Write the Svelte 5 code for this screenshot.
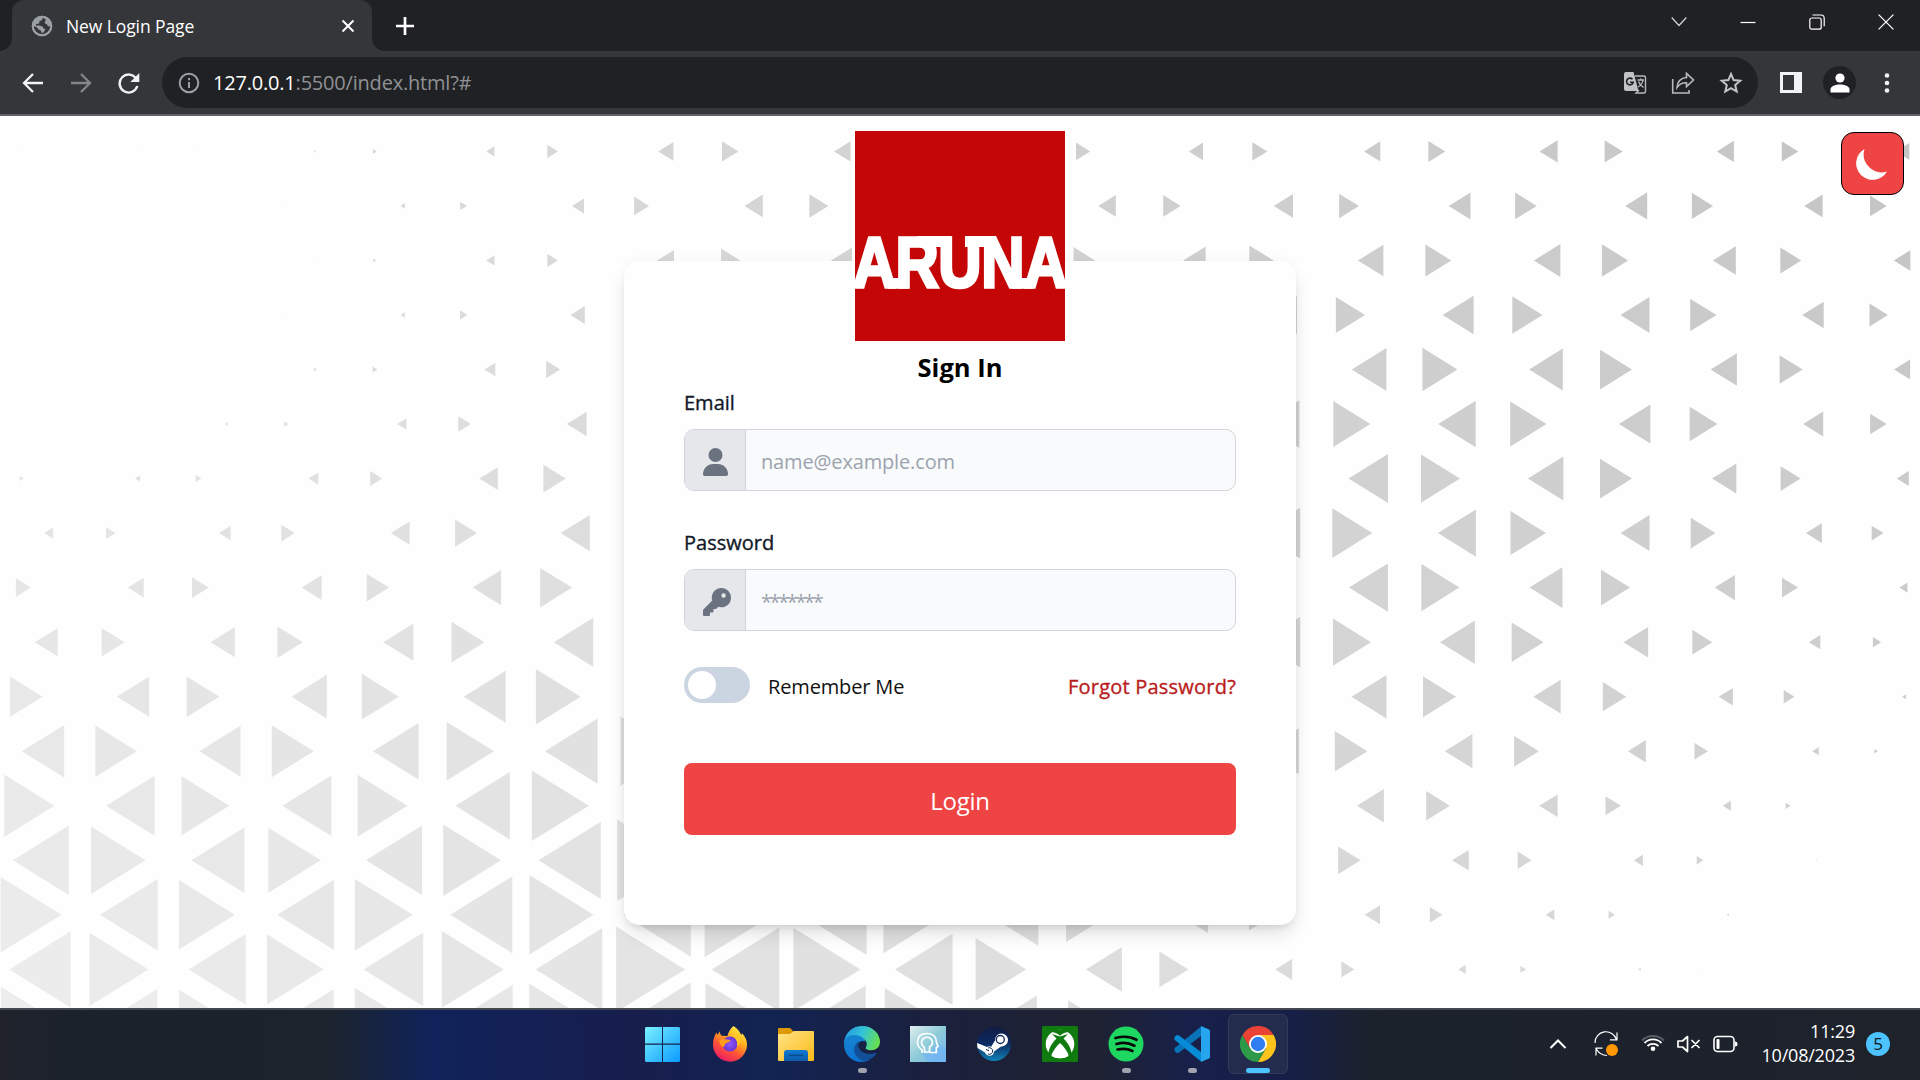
<script>
  // Width of every triangle, row by row. Even-indexed rows begin with a
  // right-pointing triangle, odd-indexed rows with a left-pointing one.
  const sizes = [
    [0.8, 0.8, 0.8, 2, 4, 8.2, 10.6, 15.2, 16.5, 16.5, 0, 0, 14.2, 14.2, 14.9, 16.3, 16.9, 18.1, 18.1, 17.1, 16.5, 13.4],
    [0, 0, 0, 0.7, 4.5, 6.7, 12, 15, 18.4, 19, 0, 0, 17.5, 17.5, 19.2, 19.8, 21.8, 21.6, 22, 21.2, 18.4, 16.7],
    [0, 0, 0, 0.8, 3, 8.2, 10.6, 17, 19.3, 21, 0, 0, 21.6, 22.5, 24.3, 25.5, 25.9, 26.5, 26.3, 23, 21, 16.5],
    [0, 0, 0, 0.6, 4.5, 7.5, 14.3, 0, 0, 0, 0, 0, 0, 0, 31, 29.2, 31, 30.2, 29, 26.3, 21.5, 18.4],
    [0, 0, 0.5, 3, 5, 11, 14, 0, 0, 0, 0, 0, 0, 0, 0, 34.7, 35, 33.7, 32, 26.3, 23, 16],
    [0.6, 0.8, 3, 4.3, 9.2, 12.5, 19.8, 0, 0, 0, 0, 0, 0, 0, 38.5, 37, 37.5, 36.3, 31.4, 27.8, 20, 16.5],
    [4, 5, 5.7, 9.8, 12, 18.4, 22.4, 0, 0, 0, 0, 0, 0, 0, 0, 39.5, 39, 35.5, 32, 24.3, 20, 12],
    [9, 9.3, 11.8, 13.5, 18.7, 22, 29.2, 0, 0, 0, 0, 0, 0, 0, 41, 40, 38, 35.5, 29, 24.8, 15.8, 11.8],
    [15, 15.9, 16.6, 20, 22.4, 28.4, 31.8, 0, 0, 0, 0, 0, 0, 0, 0, 39, 38, 33, 29, 20.2, 16, 8.2],
    [22.9, 22.9, 24.3, 25.3, 30, 33, 39.5, 0, 0, 0, 0, 0, 0, 0, 41, 38, 35, 31.8, 24.7, 20, 11.4, 8.2],
    [32.4, 32.4, 32.6, 35.3, 37, 42, 44.7, 0, 0, 0, 0, 0, 0, 0, 0, 35, 33, 27.3, 23.6, 14.2, 10.8, 4],
    [42.4, 41.4, 41.2, 42, 45.7, 47.3, 52.6, 55.8, 0, 0, 0, 0, 0, 0, 37, 32.6, 27.6, 24.8, 18, 13.5, 6.5, 3.5],
    [50.2, 48.5, 47.7, 49, 50, 54.3, 57, 0, 0, 0, 0, 0, 0, 0, 0, 27, 23.6, 18.3, 15.4, 8.2, 5, 0],
    [56, 54.5, 53, 52.5, 56, 57.8, 62.3, 65.7, 0, 0, 0, 0, 0, 0, 0, 22.4, 16.7, 14, 9, 6.7, 1, 0],
    [61, 57.6, 56, 56.6, 58, 62, 64, 67.5, 68.5, 65, 62, 50, 44, 29.5, 25.5, 15.3, 12.8, 8.6, 6.3, 2, 0, 0],
    [61.4, 59, 57, 56.5, 59.6, 62, 66.5, 69, 67.5, 67, 57.5, 50.5, 36, 29, 17, 13, 7.3, 5.5, 2.5, 1, 0, 0],
    [60, 56.5, 55, 56, 58, 63, 65, 67, 66, 62, 58, 46, 38, 22, 16, 0, 0, 0, 0, 0, 0, 0]
  ];
  const period = 176.64;
  const triangles = sizes.flatMap((row, r) =>
    row.map((w, i) => {
      const m = Math.floor(i / 2);
      const right = (i % 2 === 0) === (r % 2 === 0);
      const origin = r % 2 === 0 ? (right ? 20.9 : 138.4) : right ? 109.2 : 50.1;
      const cx = origin + m * period;
      const cy = 151.4 + r * 54.53;
      const d = right ? 1 : -1;
      const base = cx - (d * w) / 3;
      const tip = cx + (d * w * 2) / 3;
      const h = w * 0.62;
      const v = Math.round(220 - 0.0137 * cx + 0.0172 * cy);
      return {
        w,
        points: `${base.toFixed(1)},${(cy - h).toFixed(1)} ${tip.toFixed(1)},${cy.toFixed(1)} ${base.toFixed(1)},${(cy + h).toFixed(1)}`,
        fill: `rgb(${v},${v},${v})`
      };
    })
  ).filter((t) => t.w > 0);
</script>

<div class="screen">
  <header class="tabs">
    <div class="tab">
      <svg class="favicon" viewBox="0 0 22 22" width="22" height="22">
        <circle cx="11" cy="11" r="10.2" fill="#9aa0a6" />
        <path d="M12 2.4c-1 1.600-.2 2.400-2 3-1.800.5-2 1-1.600 2.200.3 1-1 1.300-2.400 1.200-1 0-1.500.8-.8 1.600.8.8 4.200.2 5.800.8 1.300.6.6 2 2 2.400 1.400.4 1.500 1.200.6 2.200-1 1-.9 2-2.400 2.100-1.200 0-.7-1.600-1.500-2.500-.9-.9-2.300-.3-2.700-1.700-.4-1.500-2.800-2.200-4.300-2.700a8.500 8.500 0 0 0 8.300 8.500c5 0 8.500-4 8.500-8.400-1.400.8-3 .2-3.200-1-.3-1.500-2.300-.9-2.600-2.400-.3-1.600 1.600-1.500 1-3-.4-1-1.700-1-2.700-2.300z" fill="#35363a" />
        <circle cx="11" cy="11" r="9.300" fill="none" stroke="#9aa0a6" stroke-width="2" />
      </svg>
      <span class="tab-title">New Login Page</span>
      <svg class="tab-close" viewBox="0 0 14 14" width="14" height="14"><path d="M1.500 1.500l11 11M12.500 1.500l-11 11" stroke="#fff" stroke-width="2" /></svg>
    </div>
    <svg class="plus" viewBox="0 0 18 18" width="18" height="18"><path d="M9 0v18M0 9h18" stroke="#fff" stroke-width="2.700" /></svg>
    <div class="window-controls">
      <svg viewBox="0 0 16 16" width="16" height="16"><path d="M.7 3.500L8 11.500l7.300-8" fill="none" stroke="#d5d6d7" stroke-width="1.200" /></svg>
      <svg viewBox="0 0 16 16" width="16" height="16"><path d="M.5 8.500h15" stroke="#fff" stroke-width="1.200" /></svg>
      <svg viewBox="0 0 16 16" width="16" height="16"><rect x=".8" y="4" width="11.400" height="11.200" rx="2" fill="none" stroke="#fff" stroke-width="1.200" /><path d="M3.500 1H12q3.200 0 3.200 3.200v8" fill="none" stroke="#fff" stroke-width="1.200" /></svg>
      <svg viewBox="0 0 16 16" width="16" height="16"><path d="M.6.6l14.800 14.800M15.400.6L.6 15.400" stroke="#fff" stroke-width="1.300" /></svg>
    </div>
  </header>

  <div class="toolbar">
    <div class="nav">
      <svg viewBox="0 0 22 22" width="22" height="22"><path d="M21 11H3M11 2l-9 9 9 9" fill="none" stroke="#f1f3f4" stroke-width="2.300" /></svg>
      <svg viewBox="0 0 22 22" width="22" height="22"><path d="M1 11h18M11 2l9 9-9 9" fill="none" stroke="#85868a" stroke-width="2.300" /></svg>
      <svg viewBox="0 0 22 22" width="22" height="22"><path d="M18.300 6.800A9 9 0 1 0 19.300 14" fill="none" stroke="#f1f3f4" stroke-width="2.400" /><path d="M21.300 1v9h-9z" fill="#f1f3f4" /></svg>
    </div>
    <div class="omnibox">
      <svg viewBox="0 0 22 22" width="22" height="22"><circle cx="11" cy="11" r="9.300" fill="none" stroke="#9aa0a6" stroke-width="2" /><path d="M11 10v6M11 6v2.200" stroke="#9aa0a6" stroke-width="2" /></svg>
      <span class="url"><b>127.0.0.1</b><span>:5500/index.html?#</span></span>
      <div class="omni-icons">
        <svg viewBox="0 0 24 24" width="24" height="24">
          <path d="M3 1h7.500l5 19H3a2 2 0 0 1-2-2V3a2 2 0 0 1 2-2z" fill="#c0c2c4" />
          <path d="M12 5h9a1.500 1.500 0 0 1 1.500 1.500v14A1.500 1.500 0 0 1 21 22h-8l3-3" fill="none" stroke="#b7b9bb" stroke-width="1.400" />
          <path d="M14.500 9h6.500M17.700 7.500V9M20 9c-.5 3-2.500 5.500-5 7M15.500 10.500c.8 2.500 2.500 4.500 5 6" fill="none" stroke="#b7b9bb" stroke-width="1.300" />
          <path d="M9.500 8.200a3.400 3.400 0 1 0 .8 3H7" fill="none" stroke="#202124" stroke-width="1.600" />
        </svg>
        <svg viewBox="0 0 24 24" width="24" height="24">
          <path d="M1.700 8v14H18v-3" fill="none" stroke="#b7b9bb" stroke-width="1.600" />
          <path d="M6 16.500C6.500 10 10 7 15.500 6.500V2.300l7 6.700-7 6.700v-4c-4.500-.2-7 1.300-9.500 4.800z" fill="none" stroke="#b7b9bb" stroke-width="1.600" />
        </svg>
        <svg viewBox="0 0 24 24" width="24" height="24"><path d="M12 3l2.600 6.100 6.600.6-5 4.300 1.500 6.500L12 17.100 6.300 20.500 7.800 14l-5-4.300 6.600-.6z" fill="none" stroke="#c4c5c7" stroke-width="2" /></svg>
      </div>
    </div>
    <svg class="panel" viewBox="0 0 22 21" width="22" height="21"><path d="M0 0h22v21H0zM3 3v15h11V3z" fill="#f1f3f4" fill-rule="evenodd" /></svg>
    <div class="avatar">
      <svg viewBox="0 0 20 20" width="20" height="20"><circle cx="10" cy="5" r="4.600" fill="#fff" /><path d="M.5 19.500v-3c0-3.500 5-5 9.500-5s9.500 1.500 9.500 5v3z" fill="#fff" /></svg>
    </div>
    <svg class="dots" viewBox="0 0 6 20" width="6" height="20"><circle cx="3" cy="2.500" r="2.300" fill="#f1f3f4" /><circle cx="3" cy="10" r="2.300" fill="#f1f3f4" /><circle cx="3" cy="17.500" r="2.300" fill="#f1f3f4" /></svg>
  </div>

  <main class="page">
    <svg class="pattern" viewBox="0 116 1920 892" width="1920" height="892">
      {#each triangles as t}
        <polygon points={t.points} fill={t.fill} />
      {/each}
    </svg>

    <button class="theme" aria-label="Dark mode">
      <svg viewBox="0 0 32 32" width="32" height="32"><path d="M9.500 0A18 18 0 0 0 32 22.500 16.500 16.500 0 1 1 9.500 0z" fill="#fff" /></svg>
    </button>

    <section class="card">
      <svg class="logo" viewBox="0 0 210 210" width="210" height="210">
        <rect width="210" height="210" fill="#c40606" />
        <text class="logo-word" x="-2" y="155.700" textLength="214" lengthAdjust="spacingAndGlyphs">ARUNA</text>
        <path d="M62 105h34v11H62zM110 105h31v11h-31zM33 147h20v10.800H33zM157 147h21v10.800h-21z" fill="#fff" />
      </svg>
      <h1>Sign In</h1>
      <label class="label" for="email">Email</label>
      <div class="field">
        <span class="addon">
          <svg viewBox="0 0 25 28" width="25" height="28"><circle cx="12.500" cy="7" r="7" fill="#6b7280" /><path d="M0 26.200C0 20.500 4.500 16 10 16h5c5.500 0 10 4.500 10 10.200 0 .9-.8 1.700-1.700 1.700H1.700C.8 27.900 0 27.100 0 26.200z" fill="#6b7280" /></svg>
        </span>
        <input id="email" type="text" placeholder="name@example.com" />
      </div>
      <label class="label second" for="password">Password</label>
      <div class="field">
        <span class="addon key">
          <svg viewBox="0 0 512 512" width="28" height="28"><path fill="#6b7280" fill-rule="evenodd" d="M336 352c97.200 0 176-78.800 176-176S433.200 0 336 0 160 78.800 160 176c0 18.700 2.900 36.800 8.300 53.700L7 391c-4.500 4.500-7 10.600-7 17v80c0 13.300 10.700 24 24 24h80c13.300 0 24-10.700 24-24v-40h40c13.300 0 24-10.700 24-24v-40h40c6.400 0 12.500-2.500 17-7l33.300-33.300c16.900 5.400 35 8.300 53.700 8.300zM376 96a40 40 0 1 1 0 80 40 40 0 1 1 0-80z" /></svg>
        </span>
        <input id="password" class="stars" type="text" placeholder="*******" />
      </div>
      <div class="options">
        <span class="toggle"><i></i></span>
        <span class="remember">Remember Me</span>
        <a class="forgot" href="#forgot">Forgot Password?</a>
      </div>
      <button class="login">Login</button>
    </section>
  </main>

  <footer class="taskbar">
    <div class="apps">
      <div class="app">
        <svg viewBox="0 0 36 36" width="36" height="36">
          <defs><linearGradient id="win" gradientUnits="userSpaceOnUse" x1="0" y1="0" x2="36" y2="36"><stop offset="0" stop-color="#7df3ff" /><stop offset="1" stop-color="#0a9bff" /></linearGradient></defs>
          <path d="M2 1h16v16.500H1V2zM19 1h16l1 1v15.500H19zM1 18.700h17V36H2l-1-1zM19 18.700h17V35l-1 1H19z" fill="url(#win)" />
        </svg>
      </div>
      <div class="app">
        <svg viewBox="0 0 36 36" width="36" height="36">
          <defs>
            <linearGradient id="fox" x1=".8" y1="0" x2=".25" y2="1"><stop offset="0" stop-color="#fff44f" /><stop offset=".35" stop-color="#ffb21c" /><stop offset=".65" stop-color="#ff5336" /><stop offset="1" stop-color="#e8186b" /></linearGradient>
            <radialGradient id="globe"><stop offset="0" stop-color="#9059ff" /><stop offset="1" stop-color="#6936d2" /></radialGradient>
          </defs>
          <path d="M21.500 0c4 2.500 6.500 5.500 7.600 9l1-1.700c3 3.500 4.900 6.700 4.900 11A17 17 0 0 1 1 19c0-5 1.200-9 3.500-12.500l1 2.500 2.300-3.800c.2 2 .7 3.500 2 4.500L15.500 10c1-4 2.800-7.500 6-10z" fill="url(#fox)" />
          <circle cx="18" cy="18" r="7.500" fill="url(#globe)" />
          <path d="M7 14.500c4-2 8-1 11.500-.3-1 2.500-4.500 2-5.500 4.300-.5 2.500-2.500 3.500-4 1.500z" fill="#ff9a1a" />
          <path d="M20 9.500c4 2 6 6 5 11 2.500-2 4-6 3-9-2-2.500-5-3-8-2z" fill="#ffc928" />
        </svg>
      </div>
      <div class="app">
        <svg viewBox="0 0 36 36" width="36" height="36">
          <defs><linearGradient id="fold" x1="0" y1="0" x2="1" y2="1"><stop offset="0" stop-color="#ffe488" /><stop offset="1" stop-color="#fbb917" /></linearGradient><linearGradient id="fb" x1="0" y1="0" x2="0" y2="1"><stop offset="0" stop-color="#0f7ad2" /><stop offset="1" stop-color="#0c5bab" /></linearGradient></defs>
          <path d="M0 3q0-1 1-1h11l4 4v5H0z" fill="#dd9a05" />
          <path d="M0 8h12l4-3h19q1 0 1 1v28q0 1-1 1H1q-1 0-1-1z" fill="url(#fold)" />
          <path d="M6 35V27q0-3 3-3h18q3 0 3 3v8z" fill="url(#fb)" /><path d="M11 29.300h14" stroke="#0a4a8a" stroke-width="1.500" />
        </svg>
      </div>
      <div class="app running">
        <svg viewBox="0 0 36 36" width="36" height="36">
          <defs><linearGradient id="e1" x1="0" y1=".2" x2="1" y2=".5"><stop offset="0" stop-color="#2696e3" /><stop offset=".5" stop-color="#33c3d6" /><stop offset="1" stop-color="#66e052" /></linearGradient><linearGradient id="e2" x1="0" y1="0" x2="0" y2="1"><stop offset="0" stop-color="#1585cf" /><stop offset="1" stop-color="#0d72d4" /></linearGradient></defs>
          <path d="M0 17C1 6 9 0 18 0c11 0 18 8 18 15.500 0 6-4 8.700-9 8.700-3.500 0-6-1.300-5.200-2.700 2.500-4 .2-9-5.800-9.500C9 11.500 3 13 0 17z" fill="url(#e1)" />
          <path d="M0 18c0-6 5-9 10.500-9S21 12 21 15.500c-5-2-8 1.500-7 7 1 6.500 6.500 11 13 10-3 2.500-6 3.500-9.500 3.500C7 36 0 28 0 18z" fill="url(#e2)" />
          <path d="M15 15.500c-4 2-5.500 6-4.500 10.500 1 4.500 5 8 9 9 5.500-.5 10-3 12.700-7.200.5-.9-.2-1.300-.9-1-7 3-16 .2-17-7-.2-1.500 0-3 .7-4.300z" fill="#124f99" />
        </svg>
      </div>
      <div class="app">
        <svg viewBox="0 0 36 36" width="36" height="36">
          <defs><linearGradient id="bulb" x1="0" y1="0" x2="1" y2="1"><stop offset="0" stop-color="#e0eef0" /><stop offset=".5" stop-color="#8ecbd8" /><stop offset="1" stop-color="#74b4ee" /></linearGradient></defs>
          <rect width="36" height="36" fill="url(#bulb)" />
          <path d="M11 27l8 9h17V22l-9-4-8 10z" fill="#70b3f5" opacity=".7" />
          <path d="M12 27v-3C8 21 7 18 7.500 15 8 10 12 7.500 17 7.500c6 0 9.500 3.500 9.500 9l1.500 4-1.700 1v5H20M14.500 27v-5.500C11 19 11 15.500 12.500 13.500c2-3 7-3 9 0 1.500 2.500 1 5.500-2 7.500V26h-5" fill="none" stroke="#fff" stroke-width="1.700" />
        </svg>
      </div>
      <div class="app">
        <svg viewBox="0 0 36 36" width="36" height="36">
          <defs><linearGradient id="st" x1="0" y1="0" x2="0" y2="1"><stop offset="0" stop-color="#111b45" /><stop offset=".5" stop-color="#0d2b63" /><stop offset="1" stop-color="#1084b9" /></linearGradient></defs>
          <circle cx="18" cy="18" r="17" fill="url(#st)" />
          <path d="M1 17l10 4c2-1 3-1 4 0l4-6.500a6.500 6.500 0 1 1 6 6l-7 5c0 5-7 6-9 1L1.500 22z" fill="#fff" />
          <circle cx="24.300" cy="13.500" r="4" fill="#fff" stroke="#142b58" stroke-width="1.400" />
          <path d="M10 23.500l3 1.200M12 28a3.300 3.300 0 1 0 0-6" fill="none" stroke="#142b58" stroke-width="1" />
        </svg>
      </div>
      <div class="app">
        <svg viewBox="0 0 36 36" width="36" height="36">
          <rect width="36" height="36" rx="1.500" fill="#107c10" /><circle cx="18" cy="18" r="14.300" fill="#fff" />
          <path d="M9 6.500c3-.8 6 .8 9 3.200 3-2.400 6-4 9-3.200l-1-3H10zM14.500 12.500C9 18 6 24 6.300 29.500L9 30c2-5 5-9.500 9-13 4 3.500 7 8 9 13l2.700-.5C30 24 27 18 21.500 12.500L26 8l-8 2.500L10 8z" fill="#107c10" />
          <path d="M9.500 30c2.500-5 5-9 8.500-12 3.500 3 6 7 8.500 12-5 3-12 3-17 0z" fill="#fff" />
        </svg>
      </div>
      <div class="app running">
        <svg viewBox="0 0 36 36" width="36" height="36"><circle cx="18" cy="18" r="17.500" fill="#1ed760" /><path d="M7.500 12c7.500-2 15-1.500 21 1.800M8.500 18c6-1.700 12.500-1.200 18 1.700M9.500 23.500c5.500-1.300 10.500-.8 15 1.500" fill="none" stroke="#0a0a0a" stroke-width="2.700" stroke-linecap="round" /></svg>
      </div>
      <div class="app running">
        <svg viewBox="0 0 36 36" width="36" height="36">
          <path d="M1 25.500q2 2.500 4 1L27 10V.5L.8 22q-1 1.500.2 3.500z" fill="#0873b8" />
          <path d="M5 9.500L27 26v9.500L.8 14q-1-1.500.2-3.500 2-2.500 4-1z" fill="#078bd4" />
          <path d="M27 0l8 3.500q1 .5 1 1.500v26q0 1-1 1.500L27 36z" fill="#26a4ee" />
        </svg>
      </div>
      <div class="app active">
        <svg viewBox="0 0 36 36" width="36" height="36">
          <path d="M2.400 9A18 18 0 0 1 33.600 9H18z" fill="#ea4335" />
          <path d="M33.600 9A18 18 0 0 1 18 36l7.800-13.500L18 9z" fill="#fcc31c" />
          <path d="M2.400 9A18 18 0 0 0 18 36l7.800-13.500H10.200z" fill="#2d9a49" />
          <path d="M2.400 9l7.800 13.500L18 9z" fill="#ea4335" />
          <circle cx="18" cy="18" r="9" fill="#fff" /><circle cx="18" cy="18" r="7.200" fill="#2f7df0" />
        </svg>
      </div>
    </div>
    <div class="tray">
      <svg viewBox="0 0 18 12" width="18" height="12"><path d="M1.500 10L9 2.500l7.500 7.500" fill="none" stroke="#fff" stroke-width="2" /></svg>
      <svg class="sync" viewBox="0 0 26 26" width="26" height="26"><path d="M2 12A11 11 0 0 1 23.500 8.500M24 1.500v7.300h-7M3 24.500v-7.300h6.500M3 17.500C5.500 22 9 24.500 14 24.500" fill="none" stroke="#fff" stroke-width="1.200" /><circle cx="19" cy="19" r="6" fill="#ff9800" /></svg>
      <svg class="wifi" viewBox="0 0 24 20" width="24" height="20">
        <path d="M1 8.500a15.500 15.500 0 0 1 22 0" fill="none" stroke="#5a5d64" stroke-width="2" />
        <path d="M3.500 11a12 12 0 0 1 17 0M6.500 14a8 8 0 0 1 11 0" fill="none" stroke="#fff" stroke-width="1.800" /><circle cx="12" cy="16.800" r="2.300" fill="#fff" />
      </svg>
      <svg class="sound" viewBox="0 0 24 18" width="24" height="18"><path d="M1 6v6h4.500l5 4.500v-15L5.500 6zM14.500 5l8 8M22.500 5l-8 8" fill="none" stroke="#fff" stroke-width="1.700" stroke-linejoin="round" /></svg>
      <svg class="battery" viewBox="0 0 25 18" width="25" height="18"><rect x="1" y="1.500" width="20" height="15" rx="3.500" fill="none" stroke="#fff" stroke-width="1.600" /><rect x="3.500" y="4" width="3" height="10" rx="1" fill="#fff" /><path d="M22 6.500q2.500 0 2.500 2.500T22 11.500z" fill="#fff" /></svg>
      <div class="clock"><span class="time">11:29</span><span class="date">10/08/2023</span></div>
      <span class="badge">5</span>
    </div>
  </footer>
</div>

<style>
  :global(body) { overflow: hidden; }
  * { box-sizing: border-box; }
  svg { display: block; flex: none; }
  .screen {
    width: 1920px;
    height: 1080px;
    display: flex;
    flex-direction: column;
    font-family: "Open Sans", "Noto Sans", sans-serif;
    background: #fefefe;
  }
  .tabs {
    height: 51px;
    flex: none;
    display: flex;
    align-items: flex-start;
    padding-left: 12px;
    background: #202124;
  }
  .tab {
    position: relative;
    width: 360px;
    height: 51px;
    padding: 1px 17px 0 19px;
    display: flex;
    align-items: center;
    border-radius: 12px 12px 0 0;
    background: #35363a;
  }
  .tab::before,
  .tab::after {
    content: "";
    position: absolute;
    bottom: 0;
    width: 12px;
    height: 12px;
  }
  .tab::before { left: -12px; background: radial-gradient(circle at 0 0, #202124 11.500px, #35363a 12px); }
  .tab::after { right: -12px; background: radial-gradient(circle at 100% 0, #202124 11.500px, #35363a 12px); }
  .tab-title { margin: -1px 0 0 13px; font-size: 17.500px; letter-spacing: -0.1px; color: #fff; white-space: nowrap; }
  .tab-close { margin-left: auto; }
  .plus { margin: 17px 0 0 24px; }
  .window-controls { margin: 14px 26px 0 auto; display: flex; gap: 53px; }

  .toolbar {
    height: 65px;
    flex: none;
    display: flex;
    align-items: center;
    background: #35363a;
    border-bottom: 2px solid #5f6063;
  }
  .nav { display: flex; gap: 26px; padding-left: 22px; width: 162px; }
  .omnibox {
    width: 1596px;
    height: 51px;
    display: flex;
    align-items: center;
    padding: 0 15px 0 16px;
    border-radius: 26px;
    background: #202124;
  }
  .url { margin-left: 13px; font-size: 20px; letter-spacing: -0.2px; color: #8f9195; white-space: nowrap; }
  .url b { font-weight: 400; color: #fff; }
  .omni-icons { margin-left: auto; display: flex; gap: 24px; }
  .panel { margin-left: 22px; }
  .avatar {
    width: 33px;
    height: 33px;
    margin-left: 21px;
    display: flex;
    align-items: center;
    justify-content: center;
    border-radius: 50%;
    background: #202124;
  }
  .dots { margin-left: 28px; }

  .page {
    position: relative;
    height: 892px;
    flex: none;
    display: flex;
    justify-content: center;
    align-items: flex-start;
    padding-top: 145px;
    overflow: hidden;
    background: #fefefe;
  }
  .pattern { position: absolute; inset: 0; }
  .theme {
    position: absolute;
    top: 16px;
    right: 16px;
    width: 63px;
    height: 63px;
    display: flex;
    align-items: center;
    justify-content: center;
    padding: 3px 3px 0 0;
    border: 1.500px solid #000;
    border-radius: 13px;
    background: #ef4444;
  }
  .card {
    position: relative;
    width: 672px;
    height: 664px;
    padding: 0 60px;
    display: flex;
    flex-direction: column;
    border-radius: 15px;
    background: #fefefe;
    box-shadow: 0 12px 19px -4px rgba(0, 0, 0, 0.12), 0 5px 8px -5px rgba(0, 0, 0, 0.12), 0 0 14px rgba(0, 0, 0, 0.04);
  }
  .logo { margin: -130px auto 0; }
  .logo-word {
    font-family: "Liberation Sans", Arial, sans-serif;
    font-size: 70px;
    font-weight: 700;
    fill: #fff;
    stroke: #fff;
    stroke-width: 3.600px;
  }
  h1 {
    margin: 7px 0 0;
    height: 38px;
    text-align: center;
    font-size: 25.500px;
    line-height: 38px;
    font-weight: 700;
    color: #000;
  }
  .label {
    height: 30px;
    margin: 2px 0 11px;
    font-size: 20px;
    line-height: 30px;
    font-weight: 500;
    -webkit-text-stroke: 0.35px #111827;
    color: #111827;
  }
  .second { margin: 37px 0 11px; }
  .field {
    height: 62px;
    flex: none;
    display: flex;
    border: 1px solid #d1d5db;
    border-radius: 10px;
    overflow: hidden;
    background: #f9fafb;
  }
  .addon {
    width: 61px;
    flex: none;
    display: flex;
    align-items: center;
    padding: 4px 0 0 18px;
    background: #e5e7eb;
    border-right: 1px solid #d1d5db;
  }
  input {
    flex: 1;
    min-width: 0;
    border: 0;
    padding: 2px 15px 0;
    font: 400 20px "Open Sans", "Noto Sans", sans-serif;
    letter-spacing: -0.15px;
    background: transparent;
  }
  .stars { letter-spacing: -2.400px; }
  input::placeholder { color: #9ca3af; opacity: 1; }
  .options { height: 36px; flex: none; margin-top: 36px; display: flex; align-items: center; }
  .toggle { width: 66px; height: 36px; padding: 4px; border-radius: 18px; background: #cbd5e1; }
  .toggle i { display: block; width: 28px; height: 28px; border-radius: 50%; background: #fff; }
  .remember { margin: 4px 0 0 18px; font-size: 20px; line-height: 30px; letter-spacing: -0.15px; color: #111; }
  .forgot {
    margin: 4px 0 0 auto;
    font-size: 20px;
    line-height: 30px;
    font-weight: 500;
    letter-spacing: 0.22px;
    -webkit-text-stroke: 0.35px #b91c1c;
    color: #b91c1c;
    text-decoration: none;
  }
  .login {
    height: 72px;
    flex: none;
    margin-top: 60px;
    padding: 2px 0 0;
    border: 0;
    border-radius: 8px;
    font: 400 24px "Open Sans", "Noto Sans", sans-serif;
    letter-spacing: -0.3px;
    color: #fff;
    background: #ef4444;
  }

  .taskbar {
    height: 72px;
    flex: none;
    display: flex;
    align-items: center;
    border-top: 2px solid #444850;
    background: linear-gradient(90deg, #1f222b 0, #1b222c 80px, #1b232d 330px, #10235a 430px, #151f52 560px, #171e4c 640px, #122352 770px, #1b203c 940px, #1f2231 1090px, #18204a 1190px, #161f48 1290px, #1c222c 1370px, #1d222b 1920px);
  }
  .apps { display: flex; padding-left: 629px; gap: 6px; }
  .app {
    position: relative;
    width: 60px;
    height: 60px;
    margin-top: -2px;
    display: flex;
    align-items: center;
    justify-content: center;
    border-radius: 6px;
  }
  .app:first-child { width: 66px; margin-right: -1px; }
  .app.running::after,
  .app.active::after {
    content: "";
    position: absolute;
    bottom: 1px;
    width: 9px;
    height: 5px;
    border-radius: 3px;
    background: #a0a2b0;
  }
  .app.active { background: #242c4e; border: 1px solid #333a59; }
  .app.active::after { bottom: 0; width: 24px; background: #4cc2ff; }
  .tray { margin-left: auto; margin-right: 30px; margin-top: -3px; display: flex; align-items: center; }
  .sync { margin-left: 26px; }
  .wifi { margin-left: 22px; margin-top: -3px; }
  .sound { margin-left: 12px; }
  .battery { margin-left: 12px; }
  .clock {
    width: 117px;
    margin-top: -1px;
    display: flex;
    flex-direction: column;
    align-items: flex-end;
    font-size: 18px;
    line-height: 24px;
    letter-spacing: -0.2px;
    color: #fff;
  }
  .badge {
    width: 24px;
    height: 24px;
    margin-left: 11px;
    border-radius: 50%;
    text-align: center;
    font-size: 17px;
    line-height: 23px;
    color: #101820;
    background: #4cc2ff;
  }
</style>
